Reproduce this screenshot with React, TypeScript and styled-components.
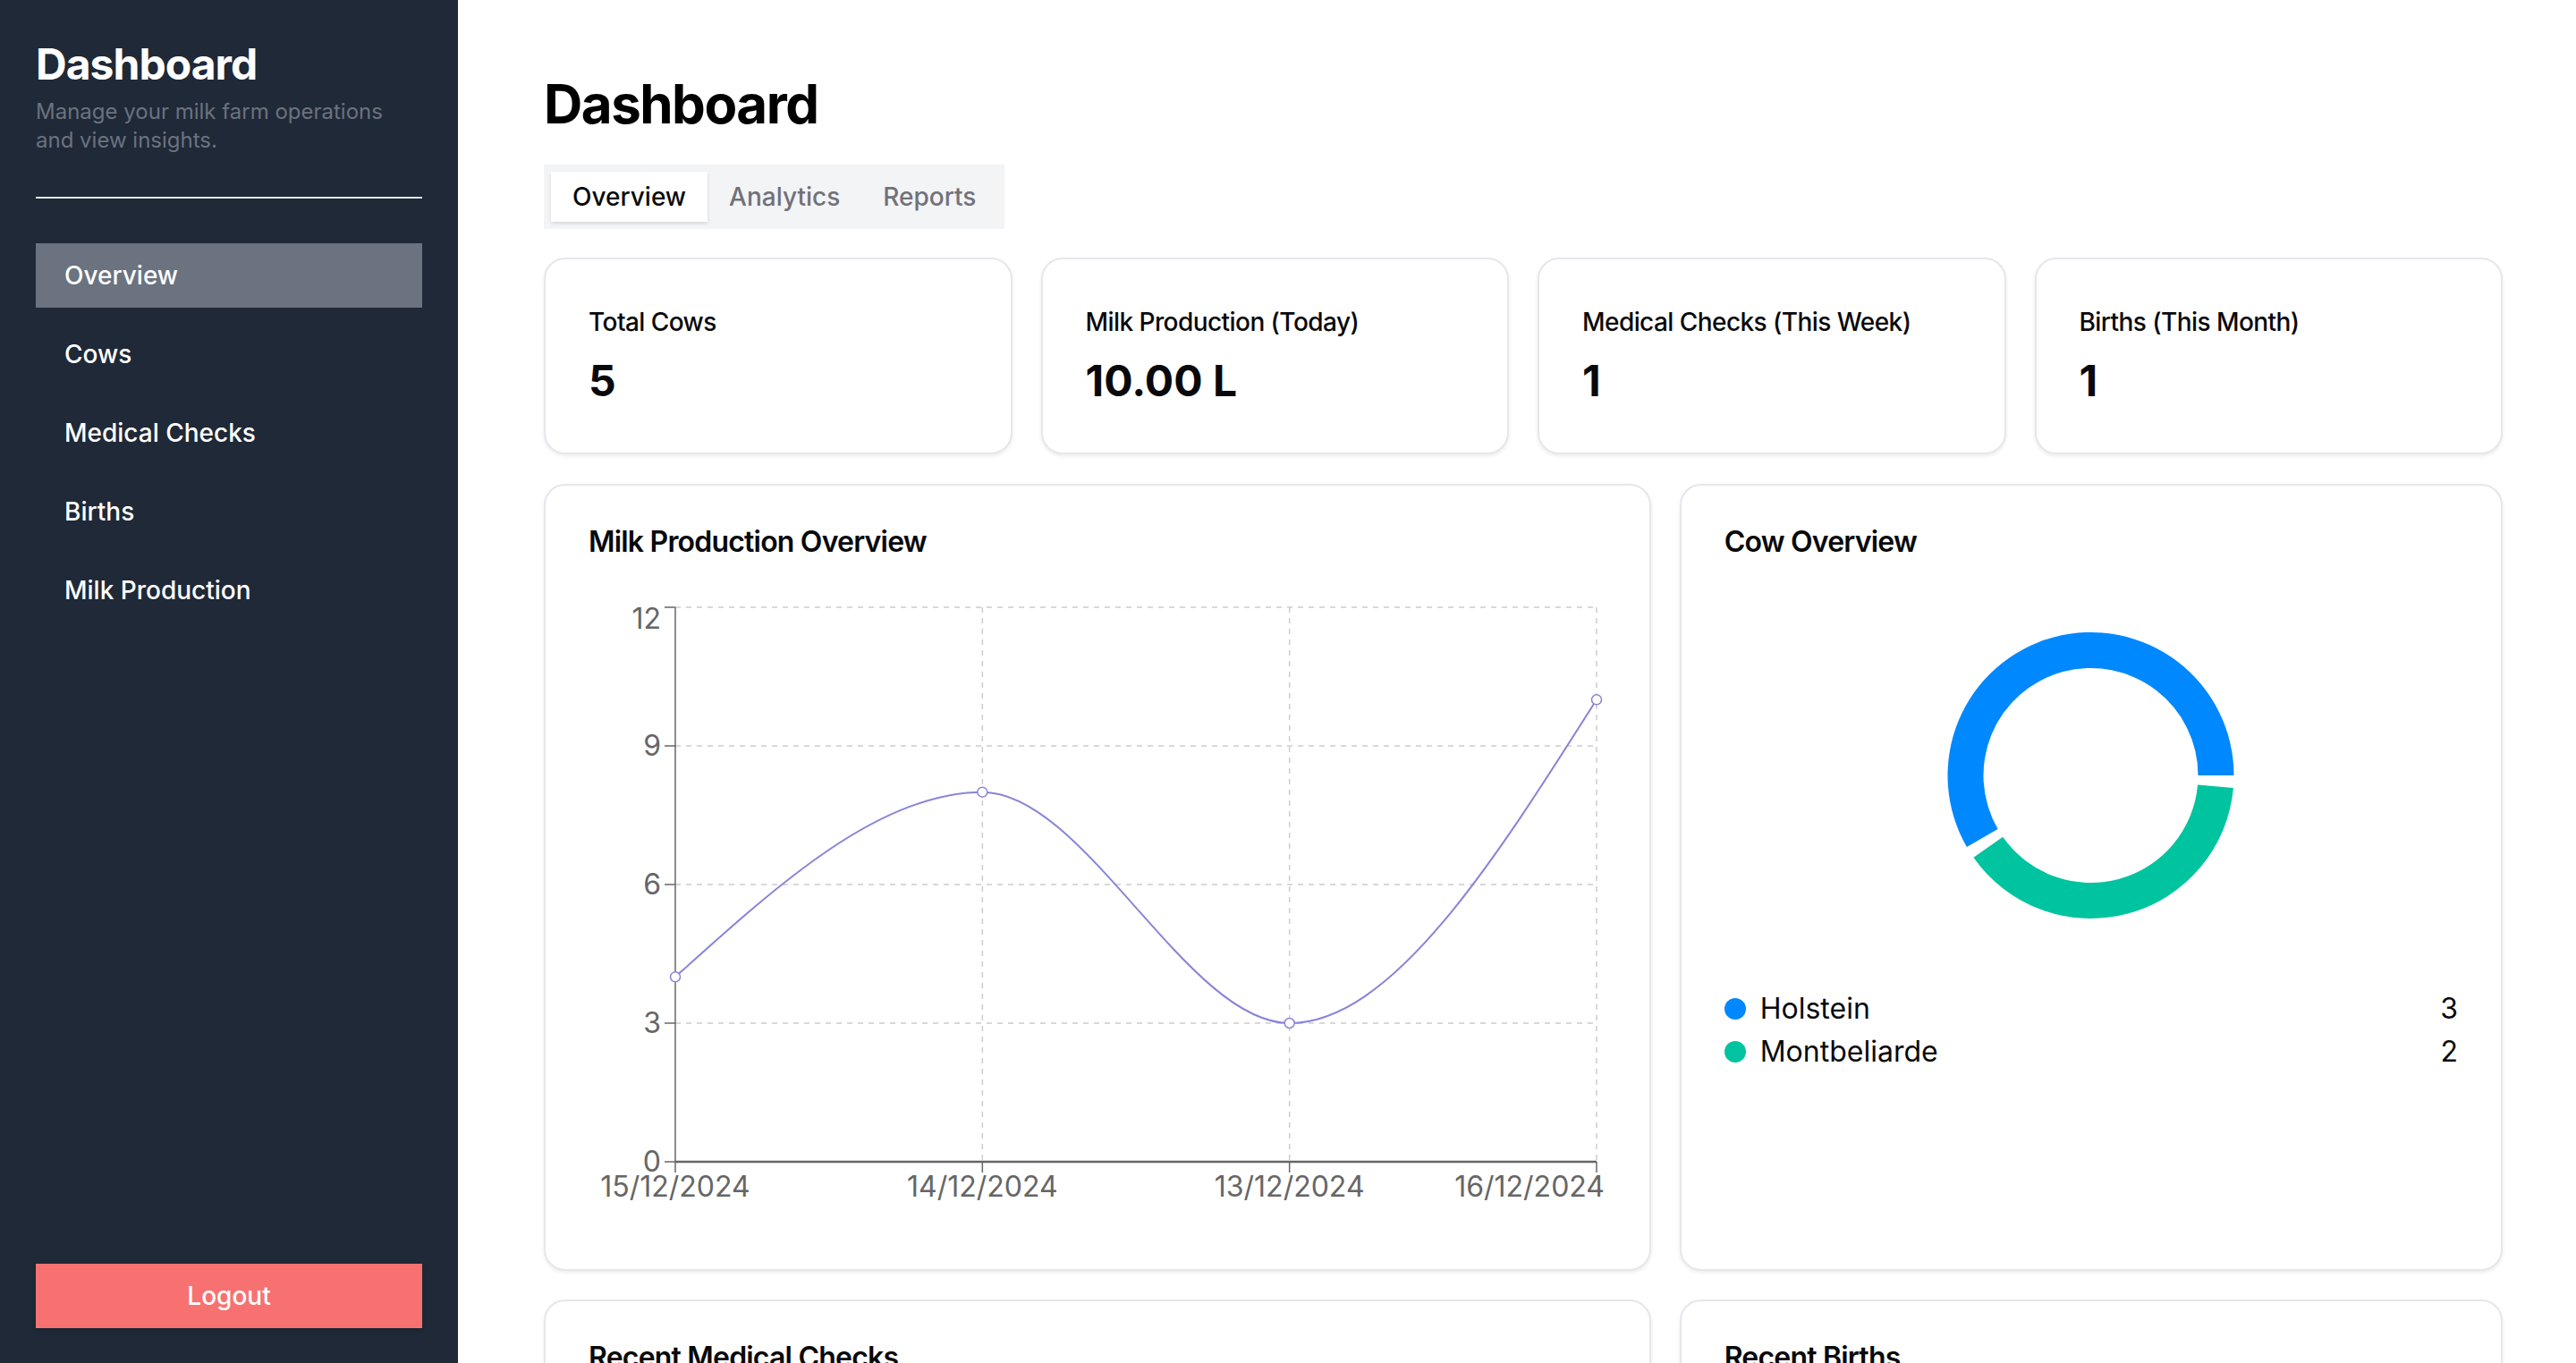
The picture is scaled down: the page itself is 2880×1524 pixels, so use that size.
import React from "react";
import styled, { createGlobalStyle } from "styled-components";

const GlobalStyle = createGlobalStyle`
  html, body {
    margin: 0;
    padding: 0;
  }
  body {
    font-family: Inter, "Noto Sans", "Liberation Sans", sans-serif;
    color: #09090b;
    background: #ffffff;
  }
  * {
    box-sizing: border-box;
  }
`;

const Layout = styled.div`
  display: flex;
  height: 100vh;
  overflow: hidden;
`;

const Sidebar = styled.aside`
  width: 512px;
  flex-shrink: 0;
  background: #1f2937;
  padding: 40px 40px 39px;
  display: flex;
  flex-direction: column;
`;

const BrandTitle = styled.h1`
  margin: 0;
  font-size: 48px;
  line-height: 64px;
  font-weight: 700;
  letter-spacing: -0.02em;
  color: #ffffff;
`;

const BrandSubtitle = styled.p`
  margin: 5px 0 0;
  font-size: 24px;
  line-height: 32px;
  color: #6b7280;
`;

const Divider = styled.hr`
  border: 0;
  height: 2px;
  background: #e5e7eb;
  margin: 47px 0 50px;
`;

const Nav = styled.nav`
  display: flex;
  flex-direction: column;
  gap: 16px;
`;

const NavItem = styled.a<{ $active?: boolean }>`
  display: flex;
  align-items: center;
  height: 72px;
  padding: 0 32px;
  font-size: 28px;
  font-weight: 500;
  color: #ffffff;
  text-decoration: none;
  background: ${(p) => (p.$active ? "#6b7280" : "transparent")};
  cursor: pointer;
`;

const LogoutButton = styled.button`
  margin-top: auto;
  height: 72px;
  width: 100%;
  border: 0;
  background: #f87171;
  color: #ffffff;
  font-family: inherit;
  font-size: 28px;
  font-weight: 500;
  box-shadow: 0 2px 6px rgba(0, 0, 0, 0.15);
  cursor: pointer;
`;

const Main = styled.main`
  flex: 1;
  padding: 80px 82px 0 96px;
  overflow: hidden;
`;

const PageTitle = styled.h2`
  margin: 0 0 32px;
  font-size: 60px;
  line-height: 72px;
  font-weight: 700;
  letter-spacing: -0.025em;
  color: #000000;
`;

const TabList = styled.div`
  display: inline-flex;
  align-items: center;
  height: 72px;
  padding: 8px;
  background: #f3f4f6;
`;

const Tab = styled.button<{ $active?: boolean }>`
  height: 56px;
  padding: 0 24px;
  border: 0;
  font-family: inherit;
  font-size: 28px;
  font-weight: 500;
  color: ${(p) => (p.$active ? "#09090b" : "#71717a")};
  background: ${(p) => (p.$active ? "#ffffff" : "transparent")};
  box-shadow: ${(p) => (p.$active ? "0 2px 4px rgba(0, 0, 0, 0.12)" : "none")};
  cursor: pointer;
`;

const StatGrid = styled.div`
  display: grid;
  grid-template-columns: repeat(4, 1fr);
  gap: 32px;
  margin-top: 32px;
`;

const Card = styled.div`
  background: #ffffff;
  border: 2px solid #e5e7eb;
  border-radius: 24px;
  box-shadow: 0 2px 4px rgba(0, 0, 0, 0.08);
`;

const StatHeader = styled.div`
  padding: 50px 48px 14px;
  font-size: 28px;
  line-height: 40px;
  font-weight: 500;
  letter-spacing: -0.02em;
`;

const StatValue = styled.div`
  padding: 0 48px 48px;
  font-size: 48px;
  line-height: 64px;
  font-weight: 700;
`;

const PanelGrid = styled.div<{ $gap: number }>`
  display: grid;
  grid-template-columns: repeat(7, 1fr);
  gap: 32px;
  margin-top: ${(p) => p.$gap}px;
`;

const Panel = styled(Card)<{ $span: number; $minHeight?: number }>`
  grid-column: span ${(p) => p.$span};
  min-height: ${(p) => (p.$minHeight ? `${p.$minHeight}px` : "auto")};
`;

const PanelTitle = styled.h3`
  margin: 0;
  padding: 49px 48px 47px;
  font-size: 32px;
  line-height: 28px;
  font-weight: 600;
  letter-spacing: -0.025em;
`;

const PanelBody = styled.div`
  padding: 0 48px 48px;
`;

const Legend = styled.ul`
  list-style: none;
  margin: 37px 0 0;
  padding: 0;
`;

const LegendRow = styled.li`
  display: flex;
  align-items: center;
  justify-content: space-between;
  font-size: 32px;
  line-height: 48px;
`;

const LegendLabel = styled.span`
  display: flex;
  align-items: center;
  gap: 16px;
`;

const Dot = styled.span<{ $color: string }>`
  width: 24px;
  height: 24px;
  border-radius: 50%;
  background: ${(p) => p.$color};
`;

const milkData = [
  { date: "15/12/2024", value: 4 },
  { date: "14/12/2024", value: 8 },
  { date: "13/12/2024", value: 3 },
  { date: "16/12/2024", value: 10 },
];

const breeds = [
  { name: "Holstein", value: 3, color: "#0088FE" },
  { name: "Montbeliarde", value: 2, color: "#00C49F" },
];

const CW = 1136;
const CH = 700;
const left = 97;
const right = 1127;
const top = 12;
const bottom = 632;
const maxY = 12;

const sx = (i: number) => left + ((right - left) * i) / (milkData.length - 1);
const sy = (v: number) => bottom - ((bottom - top) * v) / maxY;

function monotonePath(pts: [number, number][]) {
  const n = pts.length;
  const sign = (x: number) => (x < 0 ? -1 : 1);
  const t: number[] = new Array(n).fill(0);
  for (let i = 1; i < n - 1; i++) {
    const [x0, y0] = pts[i - 1];
    const [x1, y1] = pts[i];
    const [x2, y2] = pts[i + 1];
    const h0 = x1 - x0;
    const h1 = x2 - x1;
    const s0 = (y1 - y0) / h0;
    const s1 = (y2 - y1) / h1;
    const p = (s0 * h1 + s1 * h0) / (h0 + h1);
    t[i] = (sign(s0) + sign(s1)) * Math.min(Math.abs(s0), Math.abs(s1), 0.5 * Math.abs(p)) || 0;
  }
  const s2 = (a: [number, number], b: [number, number], tt: number) =>
    (3 * (b[1] - a[1])) / (b[0] - a[0]) / 2 - tt / 2;
  t[0] = s2(pts[0], pts[1], t[1]);
  t[n - 1] = s2(pts[n - 2], pts[n - 1], t[n - 2]);
  let d = `M${pts[0][0]},${pts[0][1]}`;
  for (let i = 0; i < n - 1; i++) {
    const [x0, y0] = pts[i];
    const [x1, y1] = pts[i + 1];
    const dx = (x1 - x0) / 3;
    d += ` C${x0 + dx},${y0 + dx * t[i]} ${x1 - dx},${y1 - dx * t[i + 1]} ${x1},${y1}`;
  }
  return d;
}

const MilkChart = () => {
  const pts = milkData.map((d, i) => [sx(i), sy(d.value)] as [number, number]);
  const ticks = [12, 9, 6, 3, 0];
  const axisFont = { fontFamily: "Inter, sans-serif", fontSize: 32, fill: "#666" };
  return (
    <svg width={CW} height={CH} viewBox={`0 0 ${CW} ${CH}`}>
      {ticks.slice(0, 4).map((v) => (
        <line key={v} x1={left} x2={right} y1={sy(v)} y2={sy(v)} stroke="#ccc" strokeWidth={1.5} strokeDasharray="6 6" />
      ))}
      {milkData.slice(1).map((_, i) => (
        <line key={i} x1={sx(i + 1)} x2={sx(i + 1)} y1={top} y2={bottom} stroke="#ccc" strokeWidth={1.5} strokeDasharray="6 6" />
      ))}
      <line x1={left} x2={left} y1={top} y2={bottom} stroke="#666" strokeWidth={1.5} />
      {ticks.map((v) => (
        <g key={v}>
          <line x1={left - 12} x2={left} y1={sy(v)} y2={sy(v)} stroke="#666" strokeWidth={1.5} />
          <text x={left - 16} y={sy(v) + (v === 12 ? 13 : 0)} dy="0.355em" textAnchor="end" {...axisFont}>
            {v}
          </text>
        </g>
      ))}
      <line x1={left} x2={right} y1={bottom} y2={bottom} stroke="#666" strokeWidth={2.5} />
      {milkData.map((d, i) => {
        const last = i === milkData.length - 1;
        return (
          <g key={d.date}>
            <line x1={sx(i)} x2={sx(i)} y1={bottom} y2={bottom + 12} stroke="#666" strokeWidth={1.5} />
            <text x={last ? CW : sx(i)} y={bottom + 16} dy="0.71em" textAnchor={last ? "end" : "middle"} {...axisFont}>
              {d.date}
            </text>
          </g>
        );
      })}
      <path d={monotonePath(pts)} fill="none" stroke="#8884d8" strokeWidth={2} />
      {pts.map(([x, y], i) => (
        <circle key={i} cx={x} cy={y} r={5.5} fill="#fff" stroke="#8884d8" strokeWidth={1.5} />
      ))}
    </svg>
  );
};

const PW = 819;
const PH = 400;

function sector(cx: number, cy: number, ri: number, ro: number, a0: number, a1: number) {
  const rad = (a: number) => (a * Math.PI) / 180;
  const pt = (r: number, a: number) => [cx + r * Math.cos(rad(a)), cy - r * Math.sin(rad(a))];
  const large = a1 - a0 > 180 ? 1 : 0;
  const [ox0, oy0] = pt(ro, a0);
  const [ox1, oy1] = pt(ro, a1);
  const [ix1, iy1] = pt(ri, a1);
  const [ix0, iy0] = pt(ri, a0);
  return `M${ox0},${oy0} A${ro},${ro} 0 ${large} 0 ${ox1},${oy1} L${ix1},${iy1} A${ri},${ri} 0 ${large} 1 ${ix0},${iy0} Z`;
}

const BreedPie = () => {
  const total = breeds.reduce((s, b) => s + b.value, 0);
  const pad = 5;
  const real = 360 - breeds.length * pad;
  let start = 0;
  const slices = breeds.map((b) => {
    const end = start + (real * b.value) / total;
    const s = { ...b, a0: start, a1: end };
    start = end + pad;
    return s;
  });
  return (
    <svg width={PW} height={PH} viewBox={`0 0 ${PW} ${PH}`} style={{ display: "block" }}>
      {slices.map((s) => (
        <path key={s.name} d={sector(PW / 2, PH / 2, 120, 160, s.a0, s.a1)} fill={s.color} />
      ))}
    </svg>
  );
};

const stats = [
  { label: "Total Cows", value: "5" },
  { label: "Milk Production (Today)", value: "10.00 L" },
  { label: "Medical Checks (This Week)", value: "1" },
  { label: "Births (This Month)", value: "1" },
];

const navItems = ["Overview", "Cows", "Medical Checks", "Births", "Milk Production"];

export default function App() {
  return (
    <>
      <GlobalStyle />
      <Layout>
        <Sidebar>
          <BrandTitle>Dashboard</BrandTitle>
          <BrandSubtitle>Manage your milk farm operations and view insights.</BrandSubtitle>
          <Divider />
          <Nav>
            {navItems.map((item, i) => (
              <NavItem key={item} $active={i === 0}>
                {item}
              </NavItem>
            ))}
          </Nav>
          <LogoutButton>Logout</LogoutButton>
        </Sidebar>
        <Main>
          <PageTitle>Dashboard</PageTitle>
          <TabList>
            <Tab $active>Overview</Tab>
            <Tab>Analytics</Tab>
            <Tab>Reports</Tab>
          </TabList>
          <StatGrid>
            {stats.map((s) => (
              <Card key={s.label}>
                <StatHeader>{s.label}</StatHeader>
                <StatValue>{s.value}</StatValue>
              </Card>
            ))}
          </StatGrid>
          <PanelGrid $gap={33}>
            <Panel $span={4}>
              <PanelTitle>Milk Production Overview</PanelTitle>
              <PanelBody>
                <MilkChart />
              </PanelBody>
            </Panel>
            <Panel $span={3}>
              <PanelTitle>Cow Overview</PanelTitle>
              <PanelBody>
                <BreedPie />
                <Legend>
                  {breeds.map((b) => (
                    <LegendRow key={b.name}>
                      <LegendLabel>
                        <Dot $color={b.color} />
                        {b.name}
                      </LegendLabel>
                      <span>{b.value}</span>
                    </LegendRow>
                  ))}
                </Legend>
              </PanelBody>
            </Panel>
          </PanelGrid>
          <PanelGrid $gap={32}>
            <Panel $span={4} $minHeight={400}>
              <PanelTitle>Recent Medical Checks</PanelTitle>
            </Panel>
            <Panel $span={3} $minHeight={400}>
              <PanelTitle>Recent Births</PanelTitle>
            </Panel>
          </PanelGrid>
        </Main>
      </Layout>
    </>
  );
}
